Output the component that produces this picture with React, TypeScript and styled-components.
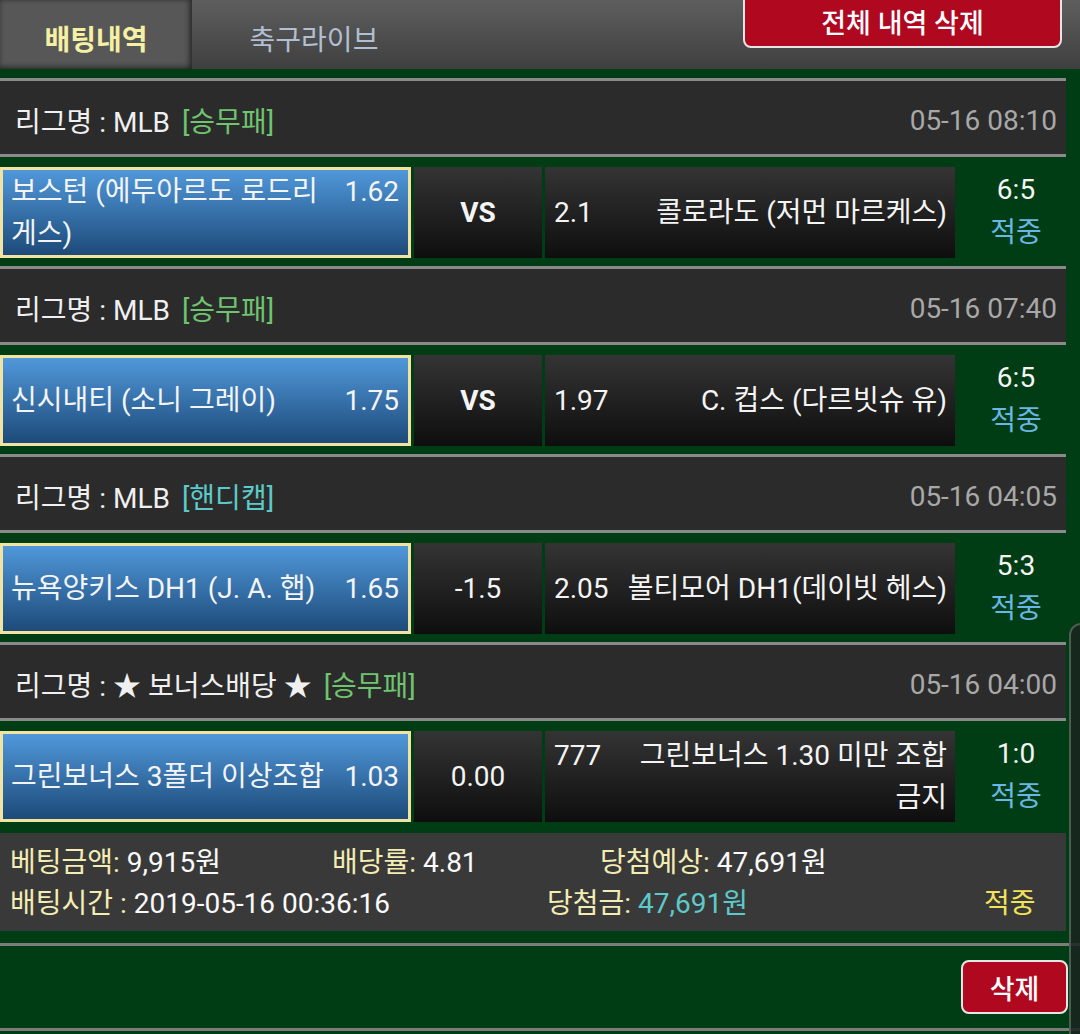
import React from "react";
import styled, { createGlobalStyle } from "styled-components";

const GlobalStyle = createGlobalStyle`
    html, body {
        margin: 0;
        padding: 0;
        background: #003d14;
    }
    body {
        font-family: Roboto, "Noto Sans CJK KR", sans-serif;
        color: #f2f2f2;
    }
`;

const Page = styled.div`
    position: relative;
    width: 1080px;
    height: 1034px;
    overflow: hidden;
    background: #003d14;
`;

const TabBar = styled.div`
    display: flex;
    height: 69px;
    background: linear-gradient(#5e5e5e, #3f3f3f);
`;

const Tab = styled.div<{ $active?: boolean }>`
    width: ${(p) => (p.$active ? 192 : 244)}px;
    display: flex;
    align-items: center;
    justify-content: center;
    padding-top: 6px;
    box-sizing: border-box;
    font-size: 28px;
    font-weight: ${(p) => (p.$active ? 700 : 400)};
    color: ${(p) => (p.$active ? "#f4f0a4" : "#b2bed2")};
    background: ${(p) => (p.$active ? "#575757" : "transparent")};
    box-shadow: ${(p) =>
        p.$active
            ? "inset -3px 0 5px rgba(0,0,0,.4), inset 0 -3px 5px rgba(0,0,0,.3)"
            : "none"};
`;

const ClearAllButton = styled.div`
    margin-left: auto;
    margin-right: 18px;
    margin-top: -8px;
    width: 319px;
    height: 56px;
    box-sizing: border-box;
    border: 2px solid #e6e6e6;
    border-radius: 8px;
    background: #b0081f;
    color: #fff;
    font-size: 27px;
    font-weight: 500;
    display: flex;
    align-items: center;
    justify-content: center;
    padding-top: 2px;
`;

const List = styled.div`
    margin-top: 9px;
`;

const LeagueHeader = styled.div`
    width: 1066px;
    height: 79px;
    box-sizing: border-box;
    border-top: 3px solid #8a8a8a;
    border-bottom: 3px solid #8a8a8a;
    background: #2b2b2b;
    display: flex;
    align-items: center;
    justify-content: space-between;
    padding: 5px 9px 0 15px;
    font-size: 28px;
`;

const LeagueName = styled.div`
    color: #f0f0f0;
`;

const BetType = styled.span<{ $kind: "win" | "handicap" }>`
    margin-left: 12px;
    color: ${(p) => (p.$kind === "win" ? "#6fc46f" : "#5ccaca")};
`;

const GameTime = styled.div`
    color: #a8a8a8;
`;

const MatchRow = styled.div`
    display: flex;
    width: 1066px;
    height: 91px;
    margin: 10px 0 8px;
    font-size: 28px;
    line-height: 42px;
`;

const TeamCell = styled.div<{ $picked?: boolean }>`
    width: ${(p) => (p.$picked ? 411 : 410)}px;
    box-sizing: border-box;
    display: flex;
    align-items: center;
    border: ${(p) => (p.$picked ? "3px solid #f1e3a2" : "none")};
    background: ${(p) =>
        p.$picked
            ? "linear-gradient(#5098da, #1d4a79)"
            : "linear-gradient(#343434, #0e0e0e)"};
    padding: ${(p) => (p.$picked ? "0 9px 0 8px" : "0 8px 0 9px")};
    margin-left: ${(p) => (p.$picked ? 0 : 3)}px;
    color: #f4f4f4;
`;

const TeamText = styled.div<{ $align: "left" | "right" }>`
    width: 100%;
    text-align: ${(p) => p.$align};
`;

const Odds = styled.span<{ $side: "left" | "right" }>`
    float: ${(p) => p.$side};
    margin-left: ${(p) => (p.$side === "right" ? 16 : 0)}px;
    margin-right: ${(p) => (p.$side === "left" ? 16 : 0)}px;
`;

const VsCell = styled.div<{ $bold?: boolean }>`
    width: 128px;
    margin-left: 3px;
    display: flex;
    align-items: center;
    justify-content: center;
    background: linear-gradient(#343434, #0e0e0e);
    font-weight: ${(p) => (p.$bold ? 700 : 400)};
    color: #f4f4f4;
`;

const ResultCell = styled.div`
    flex: 1;
    display: flex;
    flex-direction: column;
    align-items: center;
    justify-content: center;
    line-height: 43px;
    padding: 0 0 4px 11px;
`;

const Score = styled.div`
    color: #f4f4f4;
`;

const Hit = styled.div`
    color: #69b7e4;
`;

const Summary = styled.div`
    width: 1066px;
    height: 98px;
    box-sizing: border-box;
    margin-top: 11px;
    padding: 9px 0 0 10px;
    background: #393939;
    font-size: 28px;
    line-height: 41px;
`;

const SummaryLine = styled.div`
    display: flex;
`;

const SummaryCell = styled.div<{ $w?: number }>`
    width: ${(p) => (p.$w ? `${p.$w}px` : "auto")};
    flex: ${(p) => (p.$w ? "none" : 1)};
    color: #fafafa;
    white-space: nowrap;
`;

const Label = styled.span`
    color: #f3edb3;
`;

const Won = styled.span`
    color: #5ccaca;
`;

const HitMark = styled.span`
    color: #f2e35a;
`;

const Footer = styled.div`
    margin-top: 12px;
    height: 88px;
    box-sizing: border-box;
    border-top: 3px solid #7c7c7c;
    border-bottom: 3px solid #7c7c7c;
    display: flex;
    justify-content: flex-end;
    align-items: flex-start;
    padding: 14px 12px 0 0;
`;

const DeleteButton = styled.div`
    width: 107px;
    height: 54px;
    box-sizing: border-box;
    border: 2px solid #e6e6e6;
    border-radius: 8px;
    background: #b0081f;
    color: #fff;
    font-size: 27px;
    font-weight: 500;
    display: flex;
    align-items: center;
    justify-content: center;
`;

const EdgePanel = styled.div`
    position: absolute;
    left: 1069px;
    top: 623px;
    width: 30px;
    height: 440px;
    border: 2px solid #4d5d51;
    border-radius: 12px;
    background: rgba(26, 36, 30, 0.85);
`;

type Bet = {
    league: string;
    kind: "win" | "handicap";
    kindText: string;
    time: string;
    home: string;
    homeOdds: string;
    mid: string;
    midBold?: boolean;
    awayOdds: string;
    away: string;
    score: string;
};

const bets: Bet[] = [
    {
        league: "리그명 : MLB",
        kind: "win",
        kindText: "[승무패]",
        time: "05-16 08:10",
        home: "보스턴 (에두아르도 로드리게스)",
        homeOdds: "1.62",
        mid: "VS",
        midBold: true,
        awayOdds: "2.1",
        away: "콜로라도 (저먼 마르케스)",
        score: "6:5"
    },
    {
        league: "리그명 : MLB",
        kind: "win",
        kindText: "[승무패]",
        time: "05-16 07:40",
        home: "신시내티 (소니 그레이)",
        homeOdds: "1.75",
        mid: "VS",
        midBold: true,
        awayOdds: "1.97",
        away: "C. 컵스 (다르빗슈 유)",
        score: "6:5"
    },
    {
        league: "리그명 : MLB",
        kind: "handicap",
        kindText: "[핸디캡]",
        time: "05-16 04:05",
        home: "뉴욕양키스 DH1 (J. A. 햅)",
        homeOdds: "1.65",
        mid: "-1.5",
        awayOdds: "2.05",
        away: "볼티모어 DH1(데이빗 헤스)",
        score: "5:3"
    },
    {
        league: "리그명 : ★ 보너스배당 ★",
        kind: "win",
        kindText: "[승무패]",
        time: "05-16 04:00",
        home: "그린보너스 3폴더 이상조합",
        homeOdds: "1.03",
        mid: "0.00",
        awayOdds: "777",
        away: "그린보너스 1.30 미만 조합 금지",
        score: "1:0"
    }
];

const App: React.FC = () => {
    return (
        <Page>
            <GlobalStyle />
            <TabBar>
                <Tab $active>배팅내역</Tab>
                <Tab>축구라이브</Tab>
                <ClearAllButton>전체 내역 삭제</ClearAllButton>
            </TabBar>

            <List>
                {bets.map((bet, i) => (
                    <div key={i}>
                        <LeagueHeader>
                            <LeagueName>
                                {bet.league}
                                <BetType $kind={bet.kind}>{bet.kindText}</BetType>
                            </LeagueName>
                            <GameTime>{bet.time}</GameTime>
                        </LeagueHeader>
                        <MatchRow>
                            <TeamCell $picked>
                                <TeamText $align="left">
                                    <Odds $side="right">{bet.homeOdds}</Odds>
                                    {bet.home}
                                </TeamText>
                            </TeamCell>
                            <VsCell $bold={bet.midBold}>{bet.mid}</VsCell>
                            <TeamCell>
                                <TeamText $align="right">
                                    <Odds $side="left">{bet.awayOdds}</Odds>
                                    {bet.away}
                                </TeamText>
                            </TeamCell>
                            <ResultCell>
                                <Score>{bet.score}</Score>
                                <Hit>적중</Hit>
                            </ResultCell>
                        </MatchRow>
                    </div>
                ))}

                <Summary>
                    <SummaryLine>
                        <SummaryCell $w={322}>
                            <Label>베팅금액:</Label> 9,915원
                        </SummaryCell>
                        <SummaryCell $w={268}>
                            <Label>배당률:</Label> 4.81
                        </SummaryCell>
                        <SummaryCell>
                            <Label>당첨예상:</Label> 47,691원
                        </SummaryCell>
                    </SummaryLine>
                    <SummaryLine>
                        <SummaryCell $w={537}>
                            <Label>배팅시간 :</Label> 2019-05-16 00:36:16
                        </SummaryCell>
                        <SummaryCell $w={437}>
                            <Label>당첨금:</Label> <Won>47,691원</Won>
                        </SummaryCell>
                        <SummaryCell>
                            <HitMark>적중</HitMark>
                        </SummaryCell>
                    </SummaryLine>
                </Summary>

                <Footer>
                    <DeleteButton>삭제</DeleteButton>
                </Footer>
            </List>

            <EdgePanel />
        </Page>
    );
};

export default App;
